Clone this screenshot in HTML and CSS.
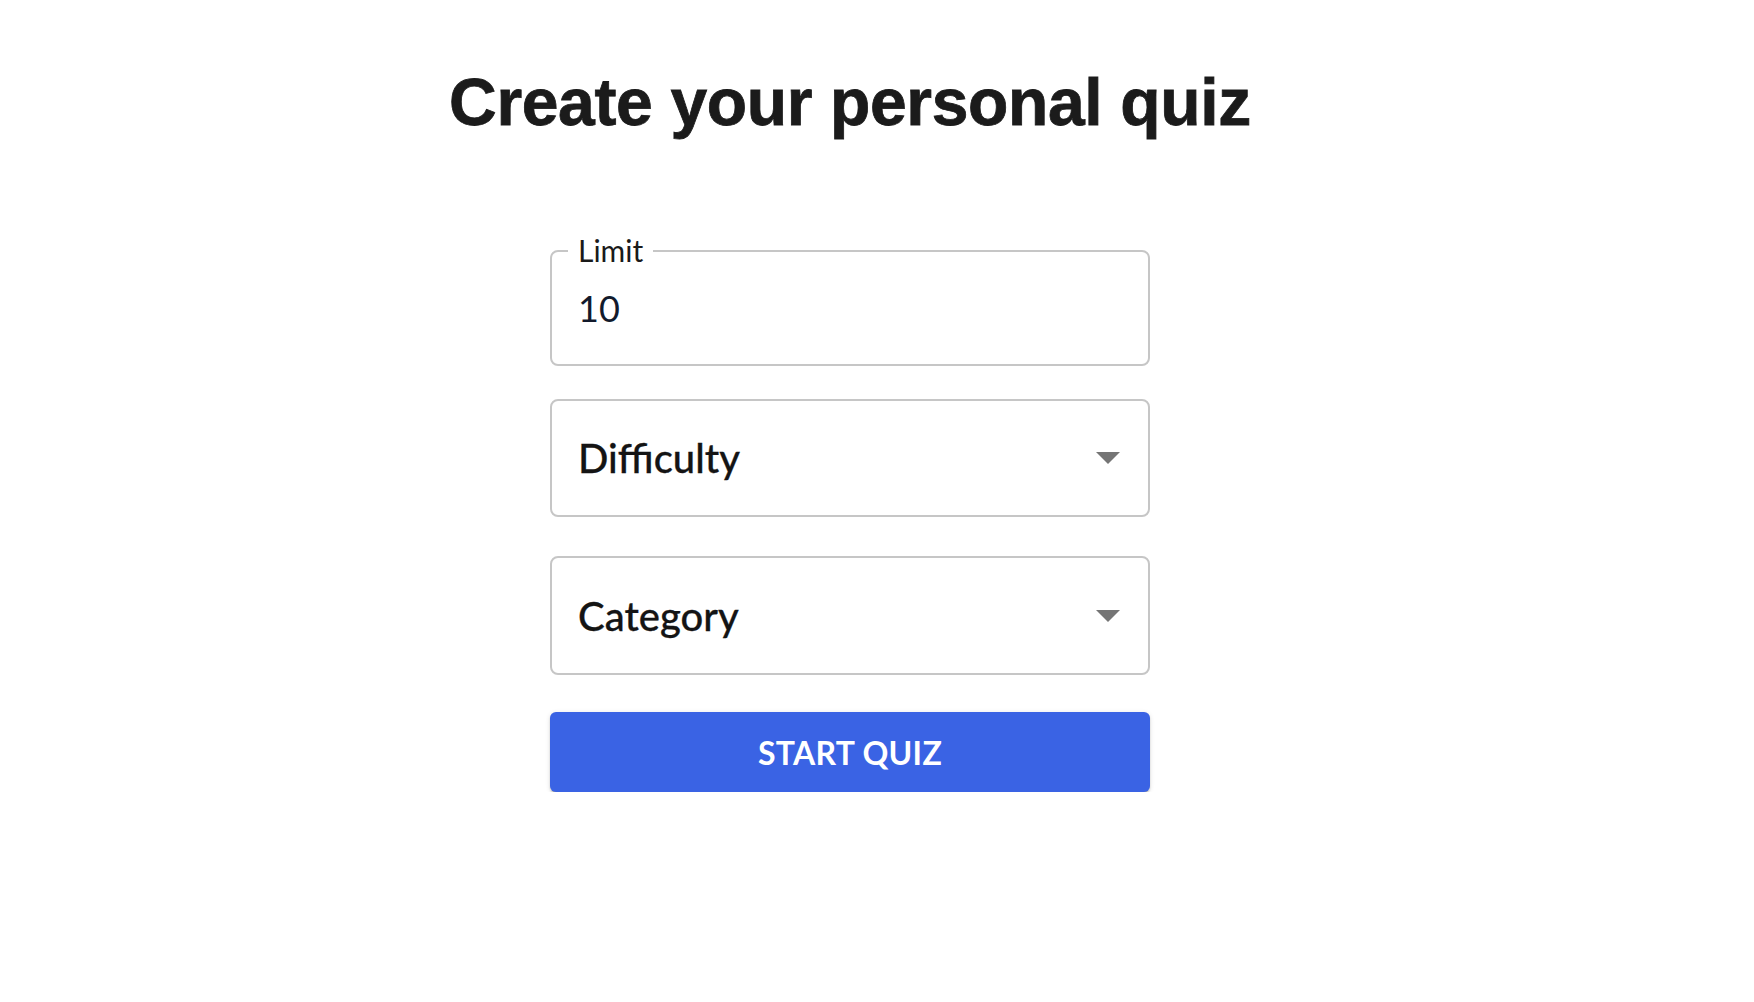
FILE: index.html
```html
<!DOCTYPE html>
<html lang="en">
<head>
<meta charset="utf-8">
<title>Create your personal quiz</title>
<link rel="stylesheet" href="styles.css">
</head>
<body>
<div class="page">
  <h1 class="title">Create your personal quiz</h1>
  <form class="form">
    <div class="field field-outlined">
      <span class="field-label">Limit</span>
      <input class="field-input" type="text" value="10">
    </div>
    <div class="field field-select field-difficulty">
      <span class="select-text">Difficulty</span>
      <svg class="select-arrow" width="24" height="12" viewBox="0 0 24 12"><path d="M0 0h24L12 12z" fill="#757575"/></svg>
    </div>
    <div class="field field-select field-category">
      <span class="select-text">Category</span>
      <svg class="select-arrow" width="24" height="12" viewBox="0 0 24 12"><path d="M0 0h24L12 12z" fill="#757575"/></svg>
    </div>
    <button class="start-btn" type="button">Start Quiz</button>
  </form>
</div>
</body>
</html>
```

FILE: styles.css
```css
html, body {
  margin: 0;
  padding: 0;
  background: #ffffff;
}

.page {
  width: 1700px;
  display: flex;
  flex-direction: column;
  align-items: center;
}

.title {
  margin: 63px 0 0 0;
  font-family: "Liberation Sans", Arial, sans-serif;
  font-weight: 700;
  font-size: 66px;
  line-height: 1.2;
  letter-spacing: -0.35px;
  -webkit-text-stroke: 0.8px #1b1b1b;
  color: #1b1b1b;
}

.form {
  width: 600px;
  margin-top: 108px;
  display: flex;
  flex-direction: column;
}

.field {
  box-sizing: border-box;
  height: 118px;
  border: 2px solid #c6c6c6;
  border-radius: 8px;
  display: flex;
  align-items: center;
  padding: 0 28px 0 26px;
  font-family: Lato, "Open Sans", sans-serif;
}

.field-outlined {
  position: relative;
  height: 116px;
}

.field-difficulty {
  margin-top: 33px;
}

.field-category {
  margin-top: 39px;
  height: 119px;
}

.field-label {
  position: absolute;
  left: 16px;
  top: -20px;
  padding: 0 10px;
  background: #ffffff;
  font-size: 30px;
  line-height: 36px;
  color: #1a1a1a;
}

.field-input {
  border: none;
  outline: none;
  padding: 0;
  margin: 0;
  width: 100%;
  font-family: Lato, "Open Sans", sans-serif;
  font-size: 36px;
  color: #121a2c;
  background: transparent;
}

.field-select {
  justify-content: space-between;
}

.select-text {
  font-size: 40px;
  font-weight: 500;
  color: #141414;
  -webkit-text-stroke: 0.3px #141414;
}

.select-arrow {
  display: block;
}

.start-btn {
  margin-top: 37px;
  height: 80px;
  border: none;
  border-radius: 6px;
  background: #3a63e4;
  color: #ffffff;
  font-family: Lato, "Open Sans", sans-serif;
  font-weight: 700;
  font-size: 32px;
  text-transform: uppercase;
  letter-spacing: 0.3px;
  box-shadow: 0 3px 1px -2px rgba(0,0,0,0.2), 0 2px 2px 0 rgba(0,0,0,0.14), 0 1px 5px 0 rgba(0,0,0,0.12);
  cursor: pointer;
}
```
